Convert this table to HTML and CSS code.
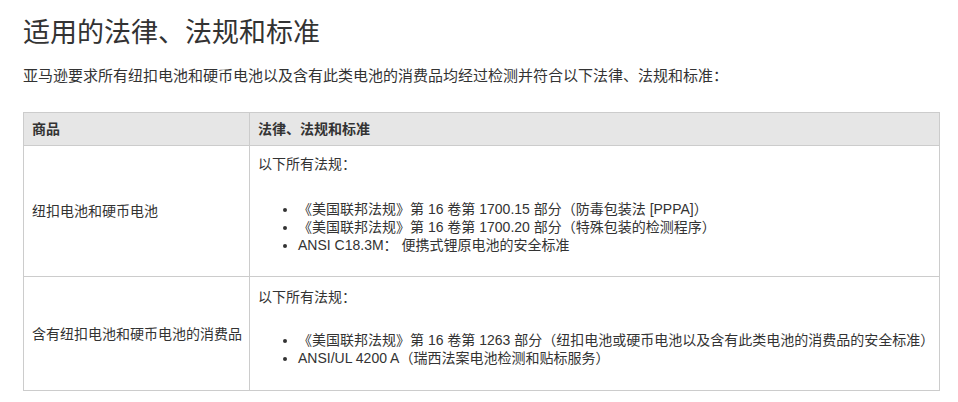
FILE: index.html
```html
<!DOCTYPE html>
<html lang="zh-CN">
<head>
<meta charset="utf-8">
<link rel="stylesheet" href="styles.css">
</head>
<body>
<div class="page">
  <h1 class="title">适用的法律、法规和标准</h1>
  <p class="intro">亚马逊要求所有纽扣电池和硬币电池以及含有此类电池的消费品均经过检测并符合以下法律、法规和标准：</p>
  <table class="regs">
    <thead>
      <tr>
        <th class="col-product">商品</th>
        <th>法律、法规和标准</th>
      </tr>
    </thead>
    <tbody>
      <tr>
        <td class="product">纽扣电池和硬币电池</td>
        <td class="laws">
          <p class="lead">以下所有法规：</p>
          <ul class="list">
            <li>《美国联邦法规》第 16 卷第 1700.15 部分（防毒包装法 [PPPA]）</li>
            <li>《美国联邦法规》第 16 卷第 1700.20 部分（特殊包装的检测程序）</li>
            <li>ANSI C18.3M： 便携式锂原电池的安全标准</li>
          </ul>
        </td>
      </tr>
      <tr>
        <td class="product">含有纽扣电池和硬币电池的消费品</td>
        <td class="laws laws-second">
          <p class="lead lead-short">以下所有法规：</p>
          <ul class="list">
            <li>《美国联邦法规》第 16 卷第 1263 部分（纽扣电池或硬币电池以及含有此类电池的消费品的安全标准）</li>
            <li>ANSI/UL 4200 A（瑞西法案电池检测和贴标服务）</li>
          </ul>
        </td>
      </tr>
    </tbody>
  </table>
</div>
</body>
</html>
```
FILE: styles.css
```css
html, body {
  margin: 0;
  padding: 0;
  background: #ffffff;
}
body {
  font-family: "Liberation Sans", "Noto Sans CJK SC", sans-serif;
  color: #333333;
}
.page {
  padding: 17px 18px 0 23px;
}
.title {
  margin: 0;
  font-size: 27px;
  line-height: 32px;
  font-weight: 400;
  color: #333333;
}
.intro {
  margin: 17px 0 26px;
  font-size: 15px;
  line-height: 20px;
}
.regs {
  width: 917px;
  border-collapse: collapse;
  table-layout: fixed;
  font-size: 14px;
  line-height: 18px;
}
.regs th,
.regs td {
  border: 1px solid #cccccc;
  padding: 7px 8px;
  text-align: left;
}
.regs th {
  background: #e6e6e6;
  font-weight: 700;
}
.col-product {
  width: 209px;
}
.product {
  vertical-align: middle;
  white-space: nowrap;
}
.laws {
  vertical-align: top;
  padding-top: 9px !important;
  padding-bottom: 22px !important;
}
.laws-second {
  padding-top: 11px !important;
  padding-bottom: 23px !important;
}
.lead {
  margin: 0 0 27px;
}
.lead-short {
  margin-bottom: 25px;
}
.list {
  margin: 0;
  padding-left: 40px;
}
.list li {
  line-height: 18px;
}
```
